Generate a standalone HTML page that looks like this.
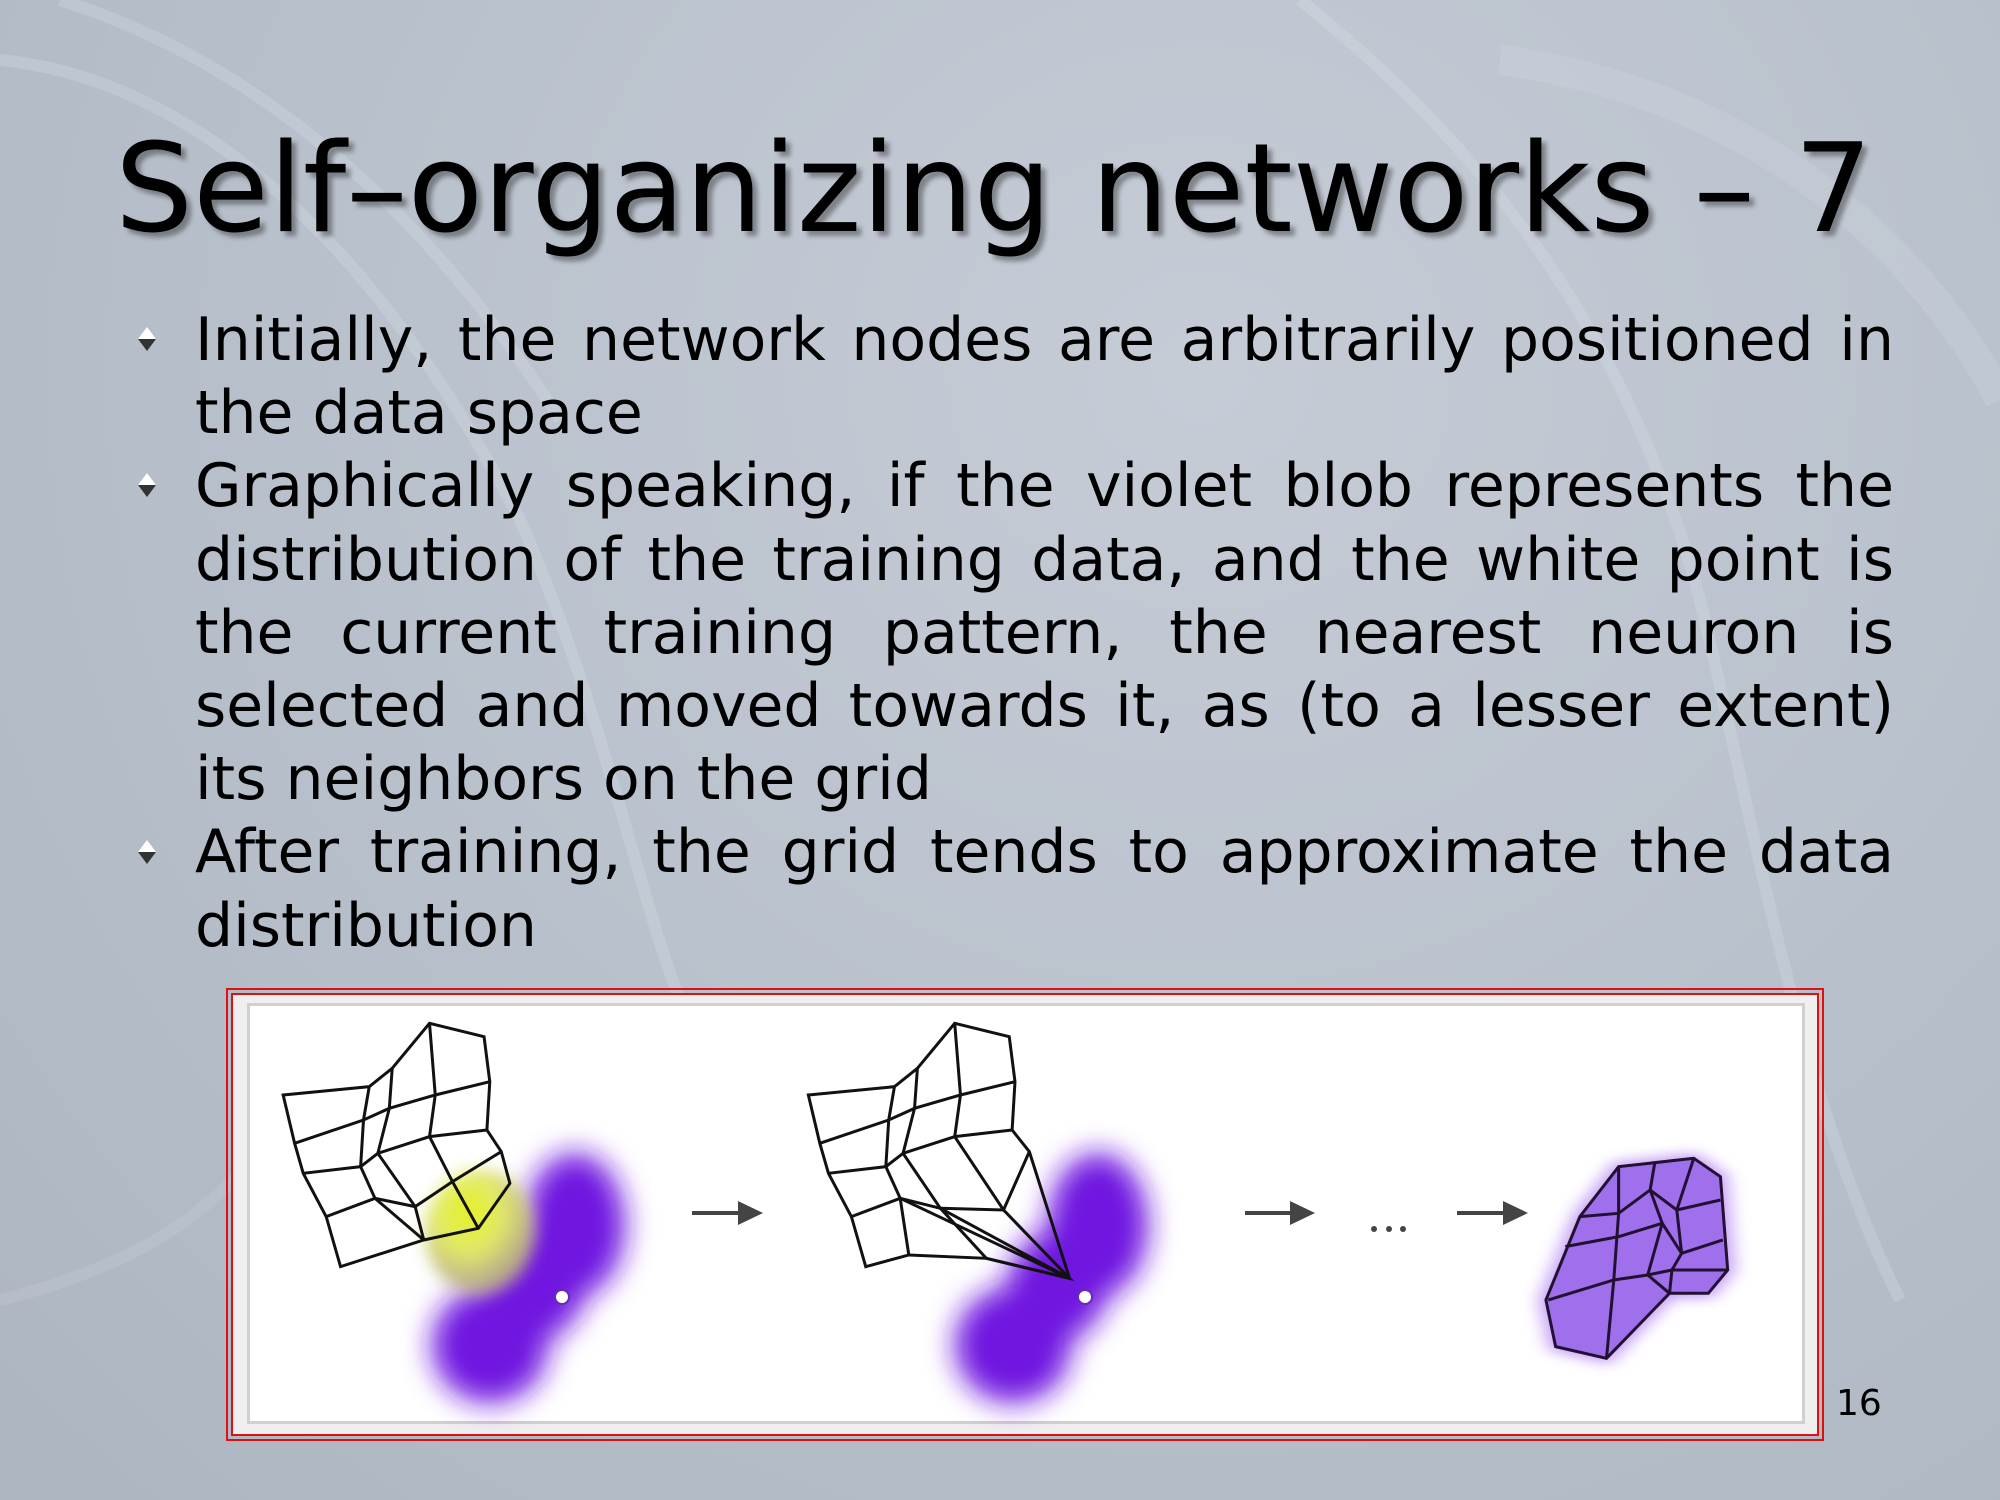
<!DOCTYPE html>
<html><head><meta charset="utf-8"><style>
html,body{margin:0;padding:0}
body{width:2000px;height:1500px;position:relative;overflow:hidden;
background:radial-gradient(ellipse at 60% 25%,#c6ccd6 0%,#bac2cd 45%,#adb5c1 100%);
font-family:"DejaVu Sans","Liberation Sans",sans-serif;color:#000}
.title{position:absolute;left:115px;top:128px;font-size:123px;line-height:123px;white-space:nowrap;
text-shadow:5px 5px 5px rgba(0,0,0,.35)}
.body{position:absolute;left:195px;top:304px;width:1699px;font-size:60px;line-height:73.2px}
.l{display:block;text-align:justify;text-align-last:justify;white-space:nowrap}
.l.e{text-align-last:left}
.b{position:absolute;left:135px;width:24px;height:26px}
.frame{position:absolute;left:226px;top:988px;width:1598px;height:453px;box-sizing:border-box;border:2px solid #e01010;padding:3px}
.frame2{width:100%;height:100%;box-sizing:border-box;border:2px solid #e01010;background:#efefef;padding:8px 12px 10px 14px}
.inner{width:100%;height:100%;box-sizing:border-box;border:3px solid #d0d0d0;background:#fff}
.pn{position:absolute;left:1836px;top:1383px;font-size:36px}
</style></head><body>
<svg width="2000" height="1500" style="position:absolute;left:0;top:0" fill="none" stroke="#dde2ea" stroke-opacity=".25" stroke-width="12">
<path d="M0 60 C200 80 380 250 520 520 C600 700 640 900 680 1000"/>
<path d="M60 0 C250 60 420 200 560 420"/>
<path d="M1300 0 C1450 120 1620 300 1700 600 C1760 850 1800 1100 1900 1300"/>
<path d="M1500 60 C1800 100 1950 300 2000 400" stroke-width="30" stroke-opacity=".2"/>
<path d="M0 1300 C200 1250 300 1150 300 1000" stroke-opacity=".15"/>
</svg>
<div class="title">Self–organizing networks – 7</div>
<svg class="b" style="top:326px" viewBox="0 0 24 26"><path d="M12 1 L21 13 L3 13Z" fill="#fff"/><path d="M3 13 L21 13 L12 25Z" fill="#333"/></svg>
<svg class="b" style="top:472px" viewBox="0 0 24 26"><path d="M12 1 L21 13 L3 13Z" fill="#fff"/><path d="M3 13 L21 13 L12 25Z" fill="#333"/></svg>
<svg class="b" style="top:839px" viewBox="0 0 24 26"><path d="M12 1 L21 13 L3 13Z" fill="#fff"/><path d="M3 13 L21 13 L12 25Z" fill="#333"/></svg>
<div class="body">
<span class="l">Initially, the network nodes are arbitrarily positioned in</span>
<span class="l e">the data space</span>
<span class="l">Graphically speaking, if the violet blob represents the</span>
<span class="l">distribution of the training data, and the white point is</span>
<span class="l">the current training pattern, the nearest neuron is</span>
<span class="l">selected and moved towards it, as (to a lesser extent)</span>
<span class="l e">its neighbors on the grid</span>
<span class="l">After training, the grid tends to approximate the data</span>
<span class="l e">distribution</span>
</div>
<div class="frame"><div class="frame2"><div class="inner"></div></div></div>
<svg width="2000" height="1500" style="position:absolute;left:0;top:0">
<defs>
<filter id="bl" x="-50%" y="-50%" width="200%" height="200%"><feGaussianBlur stdDeviation="14"/></filter>
<filter id="bl3" x="-50%" y="-50%" width="200%" height="200%"><feGaussianBlur stdDeviation="18"/></filter>
<filter id="bl2" x="-50%" y="-50%" width="200%" height="200%"><feGaussianBlur stdDeviation="8"/></filter>
<radialGradient id="yg" cx="40%" cy="35%" r="65%"><stop offset="0" stop-color="#e4f010"/><stop offset=".45" stop-color="#e2ea60"/><stop offset="1" stop-color="#b0a090"/></radialGradient>
</defs>
<g filter="url(#bl)" fill="#7018e0">
<ellipse cx="575" cy="1225" rx="50" ry="72"/><ellipse cx="490" cy="1345" rx="58" ry="58"/><ellipse cx="535" cy="1285" rx="50" ry="55"/>
<ellipse cx="1098" cy="1225" rx="50" ry="72"/><ellipse cx="1013" cy="1345" rx="58" ry="58"/><ellipse cx="1058" cy="1285" rx="50" ry="55"/>
</g>
<ellipse cx="480" cy="1232" rx="55" ry="62" fill="url(#yg)" filter="url(#bl2)" opacity=".95"/>
<g fill="#fff" stroke="#6a2ab0" stroke-width="2"><circle cx="562" cy="1297" r="7"/><circle cx="1085" cy="1297" r="7"/></g>
<g transform="translate(220,980) scale(0.574,0.3333)" fill="none" stroke="#111" stroke-width="3">
<path vector-effect="non-scaling-stroke" d="M110 345 L260 320 L300 265 L365 130 L460 170 L470 305 L465 450 L490 515 L505 610 L450 745 L355 780 L210 860 L185 710 L145 580 L130 490 Z"/>
<path vector-effect="non-scaling-stroke" d="M130 490 L250 420 L295 385 L375 345 L470 305"/>
<path vector-effect="non-scaling-stroke" d="M145 580 L245 560 L275 520 L365 470 L465 450"/>
<path vector-effect="non-scaling-stroke" d="M185 710 L270 655 L340 680 L405 605 L490 515"/>
<path vector-effect="non-scaling-stroke" d="M260 320 L250 420 L245 560 L270 655 L355 780"/>
<path vector-effect="non-scaling-stroke" d="M300 265 L295 385 L275 520 L340 680 L355 780"/>
<path vector-effect="non-scaling-stroke" d="M365 130 L375 345 L365 470 L405 605 L450 745"/>
<g transform="translate(915,0)">
<path vector-effect="non-scaling-stroke" d="M110 345 L260 320 L300 265 L365 130 L460 170 L470 305 L465 450 L495 515 L565 895 L420 835 L285 825 L210 860 L185 710 L145 580 L130 490 Z"/>
<path vector-effect="non-scaling-stroke" d="M130 490 L250 420 L295 385 L375 345 L470 305"/>
<path vector-effect="non-scaling-stroke" d="M145 580 L245 560 L275 520 L365 470 L465 450"/>
<path vector-effect="non-scaling-stroke" d="M185 710 L270 655 L340 685 L450 690 L495 515"/>
<path vector-effect="non-scaling-stroke" d="M260 320 L250 420 L245 560 L270 655 L285 825"/>
<path vector-effect="non-scaling-stroke" d="M300 265 L295 385 L275 520 L340 685 L420 835 L565 895 L450 690 L365 470 L375 345 L365 130"/>
<path vector-effect="non-scaling-stroke" d="M340 685 L565 895 L270 655"/>
</g>
</g>
<g fill="#444" stroke="#444" stroke-width="4">
<line x1="692" y1="1213" x2="740" y2="1213"/><path d="M738 1201 L763 1213 L738 1225Z" stroke="none"/>
<line x1="1245" y1="1213" x2="1292" y2="1213"/><path d="M1290 1201 L1315 1213 L1290 1225Z" stroke="none"/>
<line x1="1457" y1="1213" x2="1505" y2="1213"/><path d="M1503 1201 L1528 1213 L1503 1225Z" stroke="none"/>
<g stroke="none"><circle cx="1374" cy="1229" r="3"/><circle cx="1389" cy="1229" r="3"/><circle cx="1403" cy="1229" r="3"/></g>
</g>
<g transform="translate(1100,980) scale(0.4847,0.3333)">
<path d="M940 1100 L1045 1135 L1175 940 L1255 940 L1295 870 L1280 590 L1225 535 L1070 560 L990 710 L920 960 Z" fill="#a060f0" filter="url(#bl3)" opacity=".6" stroke="#a060f0" stroke-width="30"/>
<path d="M940 1100 L1045 1135 L1175 940 L1255 940 L1295 870 L1280 590 L1225 535 L1070 560 L990 710 L920 960 Z" fill="#a070ec"/>
<g fill="none" stroke="#221133" stroke-width="3">
<path vector-effect="non-scaling-stroke" d="M940 1100 L1045 1135 L1175 940 L1255 940 L1295 870 L1280 590 L1225 535 L1070 560 L990 710 L920 960 Z"/>
<path vector-effect="non-scaling-stroke" d="M990 710 L1070 700 L1135 630 L1190 690 L1280 660"/>
<path vector-effect="non-scaling-stroke" d="M960 800 L1070 770 L1160 730 L1200 820 L1285 780"/>
<path vector-effect="non-scaling-stroke" d="M925 960 L1060 900 L1130 885 L1180 870 L1295 870"/>
<path vector-effect="non-scaling-stroke" d="M1070 560 L1070 700 L1060 900 L1045 1135"/>
<path vector-effect="non-scaling-stroke" d="M1145 545 L1135 630 L1160 730 L1130 885 L1175 940"/>
<path vector-effect="non-scaling-stroke" d="M1225 535 L1190 690 L1200 820 L1180 870 L1175 940"/>
</g>
</g>
</svg>
<div class="pn">16</div>
</body></html>
